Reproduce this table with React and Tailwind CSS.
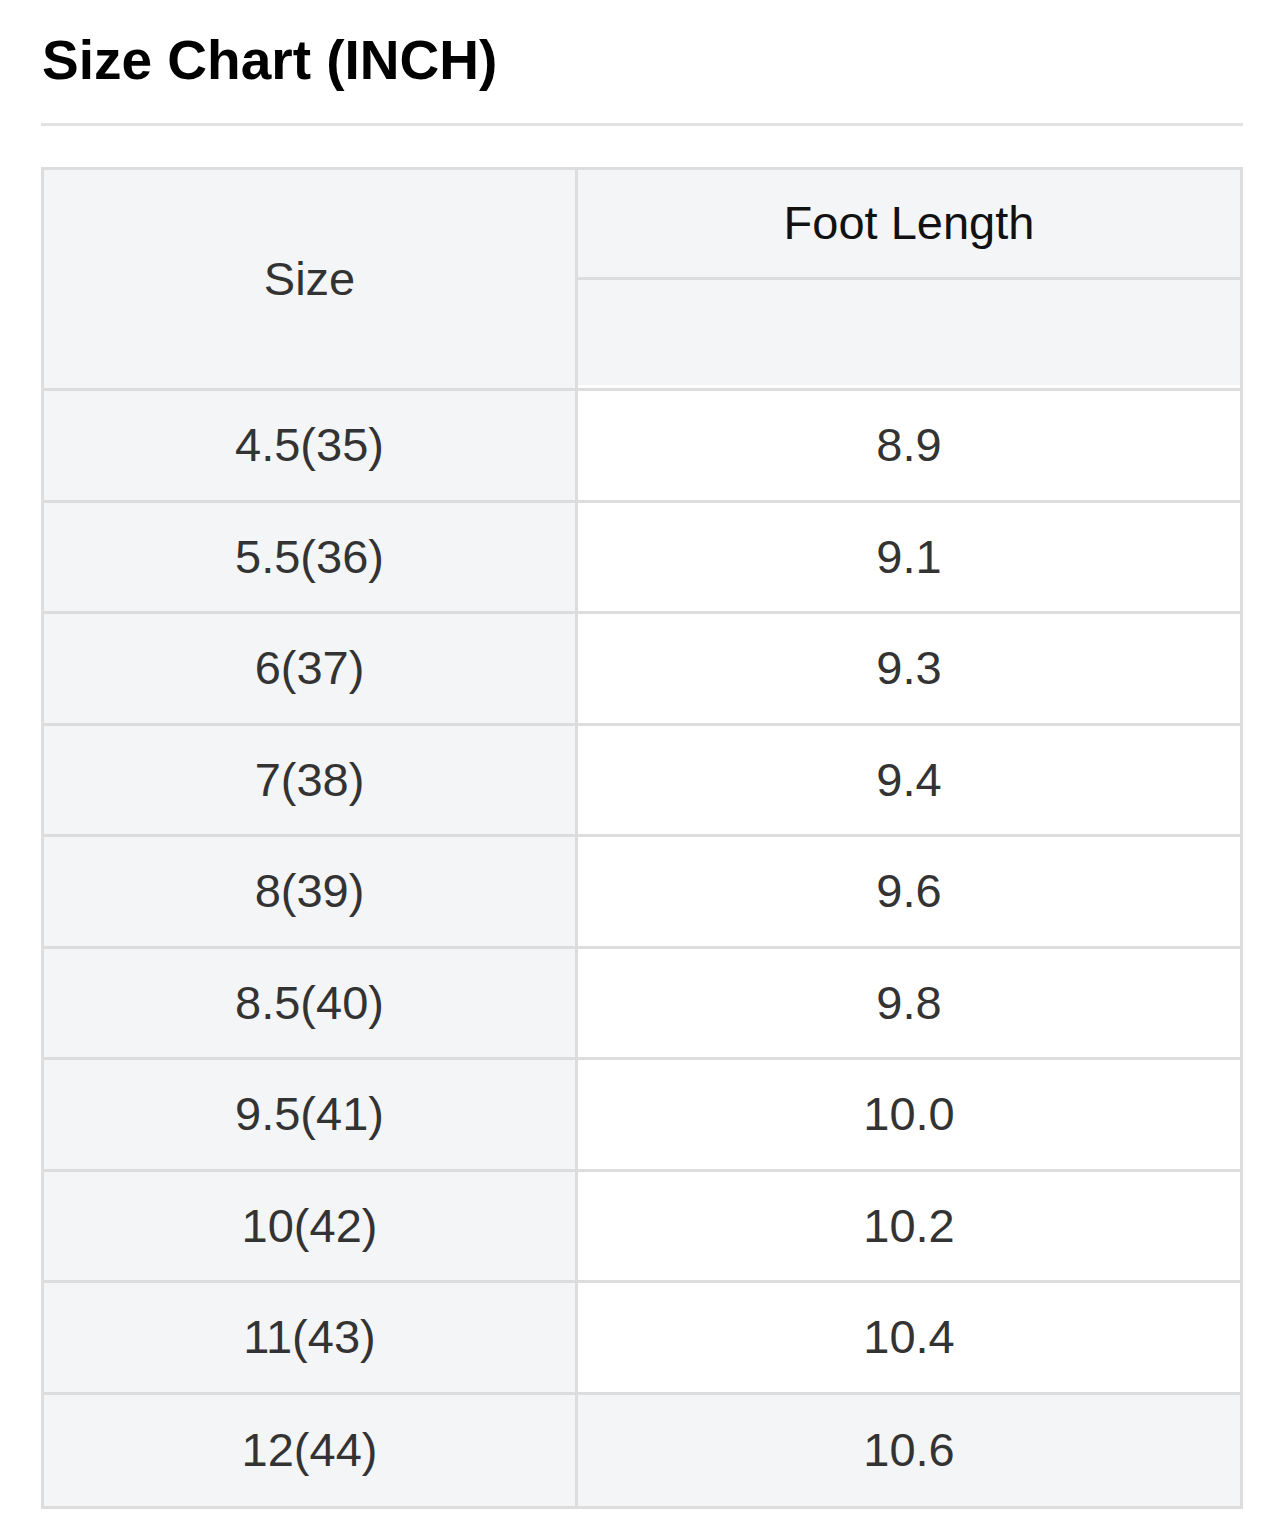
import React from 'react';

const rows = [
  ['4.5(35)', '8.9'],
  ['5.5(36)', '9.1'],
  ['6(37)', '9.3'],
  ['7(38)', '9.4'],
  ['8(39)', '9.6'],
  ['8.5(40)', '9.8'],
  ['9.5(41)', '10.0'],
  ['10(42)', '10.2'],
  ['11(43)', '10.4'],
  ['12(44)', '10.6'],
];

const App = () => {
  return (
    <div className="bg-white px-[41px] pt-[33px] pb-[14px] font-['Liberation_Sans',Arial,sans-serif]">
      <h2 className="text-[55px] font-bold leading-none text-black pl-[1px]">
        Size Chart (INCH)
      </h2>
      <div className="mt-[35px] h-[3px] bg-[#e2e2e2]"></div>

      <div className="mt-[41px] border-[3px] border-[#dddddd] text-[47px] text-[#333]">
        {/* header */}
        <div className="flex border-b-[3px] border-[#dddddd]">
          <div className="w-[534px] h-[218px] border-r-[3px] border-[#dddddd] bg-[#f4f5f7] flex items-center justify-center">
            Size
          </div>
          <div className="flex-1 flex flex-col">
            <div className="h-[110px] border-b-[3px] border-[#dddddd] bg-[#f4f5f7] flex items-center justify-center text-[#111]">
              Foot Length
            </div>
            <div className="h-[105px] bg-[#f4f5f7]"></div>
          </div>
        </div>

        {/* body */}
        {rows.map(([size, len], i) => {
          const last = i === rows.length - 1;
          return (
            <div
              key={size}
              className={`flex h-[111.5px] ${last ? 'h-[108.5px]' : 'border-b-[3px] border-[#dddddd]'}`}
            >
              <div className="w-[534px] border-r-[3px] border-[#dddddd] bg-[#f4f5f7] flex items-center justify-center">
                {size}
              </div>
              <div className={`flex-1 flex items-center justify-center ${last ? 'bg-[#f4f5f7]' : 'bg-white'}`}>
                {len}
              </div>
            </div>
          );
        })}
      </div>
    </div>
  );
};

export default App;
